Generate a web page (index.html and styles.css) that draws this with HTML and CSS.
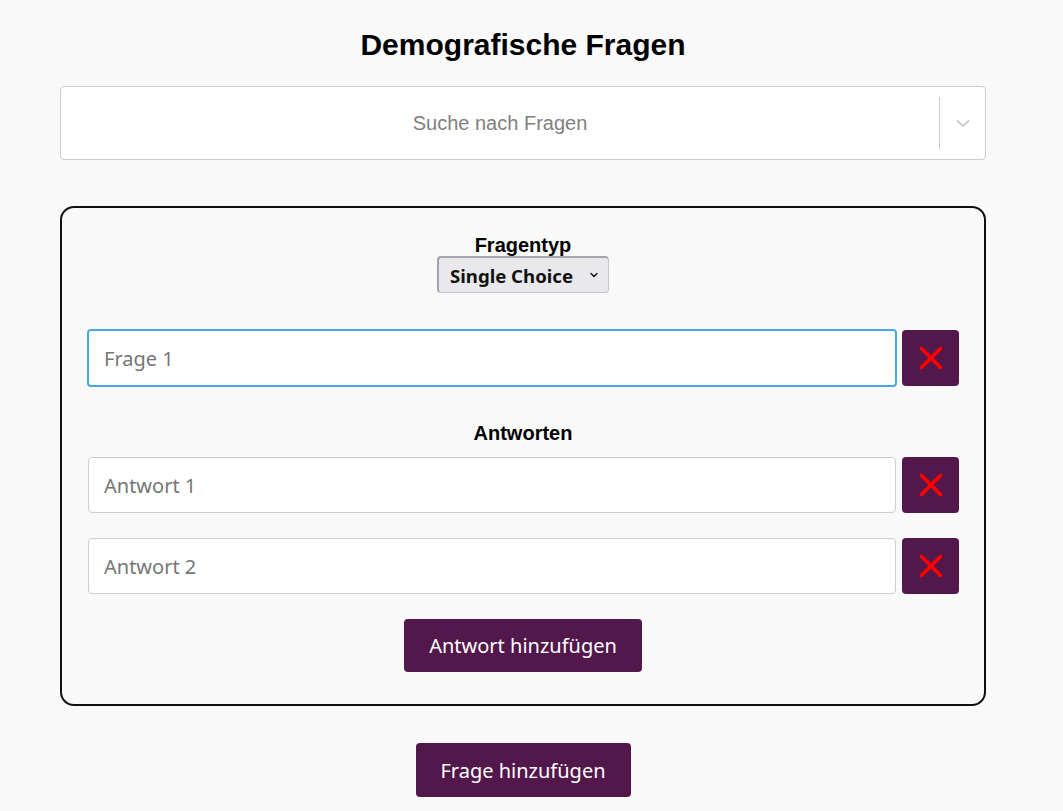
FILE: index.html
```html
<!DOCTYPE html>
<html lang="de">
<head>
<meta charset="utf-8">
<title>Demografische Fragen</title>
<link rel="stylesheet" href="styles.css">
</head>
<body>
<main class="page">
  <h1 class="title">Demografische Fragen</h1>
  <div class="search">
    <div class="search-value">Suche nach Fragen</div>
    <div class="search-indicators">
      <span class="search-sep"></span>
      <span class="search-chevron">
        <svg width="20" height="20" viewBox="0 0 20 20"><path d="M4.5 8 L10 13 L15.5 8" fill="none" stroke="#cccccc" stroke-width="2" stroke-linecap="round" stroke-linejoin="round"/></svg>
      </span>
    </div>
  </div>

  <section class="card">
    <div class="type-block">
      <div class="label">Fragentyp</div>
      <div class="select">Single Choice
        <svg class="select-arrow" width="10" height="10" viewBox="0 0 10 10"><path d="M2 3.5 L5 6.5 L8 3.5" fill="none" stroke="#111" stroke-width="1.4" stroke-linecap="round" stroke-linejoin="round"/></svg>
      </div>
    </div>

    <div class="row row-question">
      <div class="input input-focus">Frage 1</div>
      <button class="del" type="button"><svg width="26" height="26" viewBox="0 0 26 26"><path d="M3.5 3.5 L22.5 22.5 M22.5 3.5 L3.5 22.5" stroke="#ff0000" stroke-width="3.8" stroke-linecap="round"/></svg></button>
    </div>

    <div class="label answers-label">Antworten</div>

    <div class="row">
      <div class="input">Antwort 1</div>
      <button class="del" type="button"><svg width="26" height="26" viewBox="0 0 26 26"><path d="M3.5 3.5 L22.5 22.5 M22.5 3.5 L3.5 22.5" stroke="#ff0000" stroke-width="3.8" stroke-linecap="round"/></svg></button>
    </div>
    <div class="row">
      <div class="input">Antwort 2</div>
      <button class="del" type="button"><svg width="26" height="26" viewBox="0 0 26 26"><path d="M3.5 3.5 L22.5 22.5 M22.5 3.5 L3.5 22.5" stroke="#ff0000" stroke-width="3.8" stroke-linecap="round"/></svg></button>
    </div>

    <div class="center">
      <button class="btn btn-answer" type="button">Antwort hinzufügen</button>
    </div>
  </section>

  <div class="center">
    <button class="btn btn-question" type="button">Frage hinzufügen</button>
  </div>
</main>
</body>
</html>
```

FILE: styles.css
```css
* { box-sizing: border-box; }
html, body { margin: 0; padding: 0; }
body {
  background: #f9f9f9;
  font-family: "Liberation Sans", Arial, sans-serif;
  color: #000;
}
.page {
  width: 926px;
  margin-left: 60px;
  padding-top: 27px;
}
.title {
  margin: 0;
  text-align: center;
  font-size: 30px;
  font-weight: 700;
  line-height: 36px;
}
.search {
  margin-top: 23px;
  height: 74px;
  background: #fff;
  border: 1px solid #cccccc;
  border-radius: 4px;
  display: flex;
  align-items: center;
}
.search-value {
  flex: 1;
  text-align: center;
  font-size: 20px;
  color: #808080;
}
.search-indicators {
  display: flex;
  align-items: center;
  height: 100%;
}
.search-sep {
  width: 1px;
  height: 52px;
  background: #cccccc;
}
.search-chevron {
  width: 45px;
  display: flex;
  justify-content: center;
  align-items: center;
}
.card {
  margin-top: 46px;
  border: 2px solid #111;
  border-radius: 14px;
  padding: 26px 25px 32px 25px;
}
.type-block {
  display: flex;
  flex-direction: column;
  align-items: center;
}
.label {
  font-size: 20px;
  font-weight: 700;
  line-height: 22px;
  text-align: center;
}
.select {
  width: 172px;
  height: 37px;
  background: #e9e9ed;
  border: 1px solid #c4c4cc;
  border-top: 2px solid #a4a4ae;
  border-left: 2px solid #a4a4ae;
  border-radius: 4px;
  display: flex;
  align-items: center;
  padding-left: 11px;
  font-family: "Noto Sans", "Open Sans", sans-serif;
  font-weight: 700;
  font-size: 18.6px;
  color: #111;
  position: relative;
}
.select-arrow {
  position: absolute;
  right: 9px;
  top: 12px;
}
.row {
  display: flex;
  align-items: center;
  gap: 6px;
  margin-top: 25px;
}
.row-question {
  margin-top: 36px;
}
.answers-label + .row {
  margin-top: 13px;
}
.input {
  flex: 1;
  height: 56px;
  background: #fff;
  border: 1px solid #cccccc;
  border-radius: 4px;
  display: flex;
  align-items: center;
  padding-left: 15px;
  font-family: "Noto Sans", "Open Sans", sans-serif;
  font-size: 20px;
  color: #767676;
  margin-left: 1px;
}
.input-focus {
  height: 58px;
  border: 2px solid #4aa8e0;
  margin-left: 0;
  margin-right: -1px;
}
.del {
  width: 57px;
  height: 56px;
  border: none;
  border-radius: 4px;
  background: #52184b;
  display: flex;
  align-items: center;
  justify-content: center;
  padding: 0;
  flex: none;
}
.answers-label {
  margin-top: 35px;
}
.center {
  display: flex;
  justify-content: center;
}
.btn {
  border: none;
  border-radius: 4px;
  background: #52184b;
  color: #fff;
  font-family: "Noto Sans", "Open Sans", sans-serif;
  font-size: 20px;
  padding: 0;
}
.btn-answer {
  margin-top: 25px;
  width: 238px;
  height: 53px;
}
.btn-question {
  margin-top: 37px;
  width: 215px;
  height: 54px;
}
```
